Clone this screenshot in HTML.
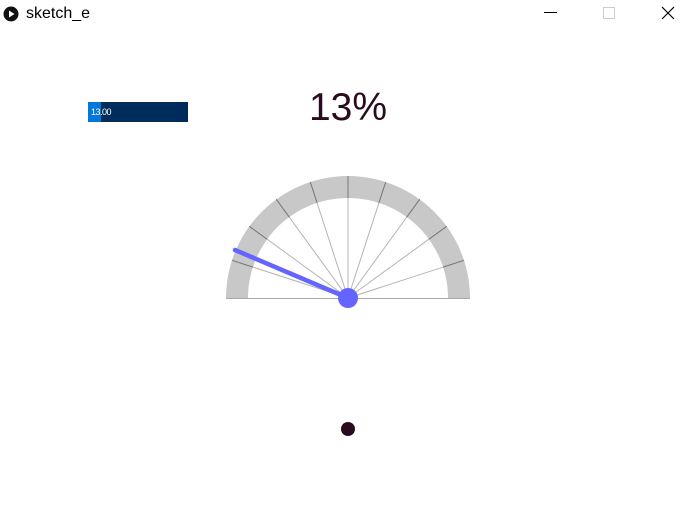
<!DOCTYPE html>
<html><head><style>
body{margin:0;width:697px;height:525px;background:#fff;overflow:hidden;position:relative;font-family:"Liberation Sans",sans-serif}
.t{position:absolute;left:26px;top:5px;font-size:16px;color:#000}
.pct{position:absolute;left:248px;width:200px;text-align:center;top:86px;font-size:39px;color:#2a0a1e}
.bar{position:absolute;left:88px;top:102px;width:100px;height:20px;background:#002c5c}
.fill{position:absolute;left:0;top:0;width:13px;height:20px;background:#0077d9}
.bt{position:absolute;left:3px;top:5px;font-size:9px;color:#fff;letter-spacing:-0.5px}
</style></head><body>
<svg width="697" height="525" style="position:absolute;left:0;top:0">
<circle cx="11" cy="14" r="7.5" fill="#111"/>
<polygon points="9,10.5 9,17.5 14.5,14" fill="#fff"/>
<line x1="544" y1="12.5" x2="557" y2="12.5" stroke="#000" stroke-width="1"/>
<rect x="603.5" y="7.5" width="11" height="11" fill="none" stroke="#ccc"/>
<path d="M662 7 L674 19 M674 7 L662 19" stroke="#000" stroke-width="1.2"/>
<path d="M226 298 A122 122 0 0 1 470 298 L448 298 A100 100 0 0 0 248 298 Z" fill="#c8c8c8"/>
<line x1="226" y1="298.5" x2="470" y2="298.5" stroke="#aaa" stroke-width="1"/>
<g stroke="#aaa" stroke-width="1" id="g"></g>
<line x1="348" y1="298" x2="235" y2="250" stroke="#6464ff" stroke-width="4.5" stroke-linecap="round"/>
<circle cx="348" cy="298" r="10" fill="#6464ff"/>
<circle cx="348" cy="429" r="7" fill="#2a0a1e"/>
</svg>
<script>
var g=document.getElementById('g'),s='';
for(var i=1;i<10;i++){var a=Math.PI*i/10,c=Math.cos(a),n=Math.sin(a);
s+='<line x1="348" y1="298" x2="'+(348-122*c)+'" y2="'+(298-122*n)+'" stroke="#b4b4b4"/>';
s+='<line x1="'+(348-100*c)+'" y1="'+(298-100*n)+'" x2="'+(348-122*c)+'" y2="'+(298-122*n)+'" stroke="#777"/>';}
g.innerHTML=s;
</script>
<div class="t">sketch_e</div>
<div class="pct">13%</div>
<div class="bar"><div class="fill"></div><div class="bt">13.00</div></div>
</body></html>
